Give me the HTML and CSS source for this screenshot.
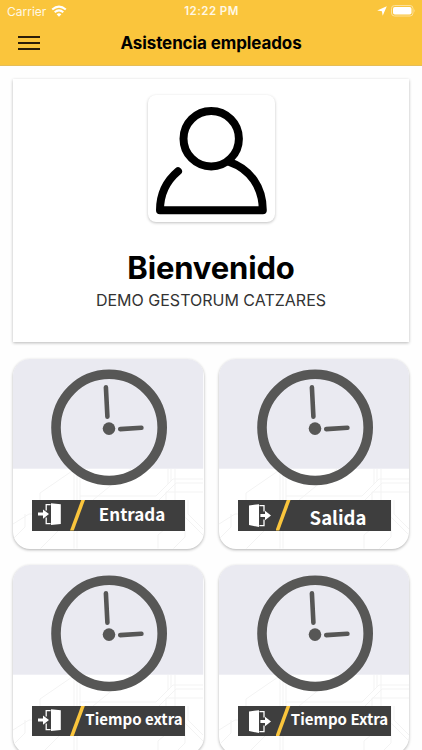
FILE: index.html
```html
<!DOCTYPE html>
<html lang="es">
<head>
    <meta charset="UTF-8">
    <meta name="viewport" content="width=device-width, initial-scale=1.0">
    <title>Asistencia empleados</title>
    <link rel="stylesheet" href="styles.css">
</head>
<body>

    <!-- simbolos compartidos por las tarjetas -->
    <svg class="simbolos" aria-hidden="true">
        <symbol id="reloj" viewBox="0 0 190.5 189.5">
            <rect class="fondo" width="190.5" height="109.7"/>
            <g class="lineas">
                <path d="M27 148V134L62 110M61 110V190M64 110V190M67 110V141M27 190L76 141M0 165L16 155H40M80 141L118 110"/>
                <path d="M190 120H160L143 137H67M190 124H163L146 141M155 110V125M158 110V122M162 110V160M190 133H153V145M172 141V178L160 190M190 170L175 155V141M190 176L172 158M0 180L12 168V155M145 190V176L152 170"/>
            </g>
            <circle class="aro" cx="96.1" cy="68.4" r="53.1"/>
            <circle class="eje" cx="96" cy="69.6" r="6.3"/>
            <path class="aguja" d="M92.9 28.4L94.4 57.6M107.2 70.1L128.4 68.8"/>
        </symbol>
        <symbol id="entrar" viewBox="0 0 24 24">
            <path d="M13 1.2L22.8 2.2V22L13 23z"/>
            <path class="marco" d="M12.6 2.6H8.2V8.6M8.2 15.6V21.6H12.6"/>
            <path d="M0 10.6H5V7.4L11 12.1L5 16.8V13.6H0z"/>
        </symbol>
        <symbol id="salir" viewBox="0 0 24 24">
            <path d="M1 2.4L11 1.2V24L1 22z"/>
            <path class="marco" d="M11.4 2.6H16V8.6M16 16.6V22.6H11.4"/>
            <path d="M12.4 11H17V7.8L23 12.5L17 17.2V14H12.4z"/>
        </symbol>
    </svg>

    <header class="cabecera">
        <div class="estado">
            <div class="operador">
                <span>Carrier</span>
                <svg class="wifi" viewBox="0 0 16 12">
                    <path d="M1.2 4.6Q8-1.4 14.8 4.6M3.7 7.3Q8 3.4 12.3 7.3"/>
                    <path class="punto" d="M5.6 9.2Q8 7.2 10.4 9.2L8 11.7z"/>
                </svg>
            </div>
            <span class="hora">12:22 PM</span>
            <div class="bateria">
                <svg class="flecha" viewBox="0 0 10 10"><path d="M9.8 .2L5.7 9.8L4.9 5.3L.2 4.5z"/></svg>
                <svg class="pila" viewBox="0 0 25 12">
                    <rect class="caja" x=".5" y=".5" width="21.5" height="10.5" rx="3"/>
                    <rect x="2" y="2" width="18.5" height="7.5" rx="1.8"/>
                    <path class="polo" d="M23.2 4Q24.6 5.8 23.2 7.6z"/>
                </svg>
            </div>
        </div>
        <nav class="barra">
            <div class="menu"><i></i><i></i><i></i></div>
            <h1 class="titulo">Asistencia empleados</h1>
        </nav>
    </header>

    <main class="contenido">
        <section class="bienvenida">
            <div class="avatar">
                <svg viewBox="0 0 127 127">
                    <circle cx="63.2" cy="43.7" r="27.7"/>
                    <path d="M30 76.3C18.5 86 12 98 12 115.2H114.8C114.8 92 102 74 81.5 67"/>
                </svg>
            </div>
            <h2 class="saludo">Bienvenido</h2>
            <p class="nombre">DEMO GESTORUM CATZARES</p>
        </section>

        <section class="opciones">
            <article class="tarjeta">
                <svg class="dibujo"><use href="#reloj"/></svg>
                <div class="etiqueta">
                    <svg class="puerta"><use href="#entrar"/></svg>
                    <span class="texto">Entrada</span>
                </div>
            </article>
            <article class="tarjeta">
                <svg class="dibujo"><use href="#reloj"/></svg>
                <div class="etiqueta">
                    <svg class="puerta salida"><use href="#salir"/></svg>
                    <span class="texto bajo">Salida</span>
                </div>
            </article>
            <article class="tarjeta">
                <svg class="dibujo"><use href="#reloj"/></svg>
                <div class="etiqueta">
                    <svg class="puerta"><use href="#entrar"/></svg>
                    <span class="texto extra">Tiempo extra</span>
                </div>
            </article>
            <article class="tarjeta">
                <svg class="dibujo"><use href="#reloj"/></svg>
                <div class="etiqueta">
                    <svg class="puerta salida"><use href="#salir"/></svg>
                    <span class="texto extra">Tiempo Extra</span>
                </div>
            </article>
        </section>
    </main>

</body>
</html>
```

FILE: styles.css
```css
* {
    margin: 0;
    padding: 0;
    box-sizing: border-box;
}
body {
    font-family: Inter, "Liberation Sans", sans-serif;
    background-color: #fefefe;
    height: 750px;
    overflow: hidden;
}

.simbolos {
    display: none;
}

/* cabecera */
.cabecera {
    height: 66px;
    background-color: #fac53c;
    border-bottom: 1px solid #e5bd58;
}

.estado {
    display: grid;
    grid-template-columns: 1fr auto 1fr;
    align-items: center;
    height: 22px;
    padding: 0 6px 0 7px;
    color: #fff8e4;
    font-size: 12px;
}

.operador,
.bateria {
    display: flex;
    align-items: center;
}

.operador {
    gap: 5px;
}

.hora {
    font-size: 11.5px;
    font-weight: 600;
    letter-spacing: .45px;
}

.bateria {
    justify-content: flex-end;
    gap: 4px;
}

.wifi {
    width: 16px;
    height: 12px;
    fill: none;
    stroke: white;
    stroke-width: 2;
}

.wifi .punto {
    fill: white;
    stroke: none;
}

.flecha {
    width: 10px;
    height: 10px;
    fill: white;
}

.pila {
    width: 25px;
    height: 12px;
    fill: white;
}

.pila .caja {
    fill: none;
    stroke: #fde19a;
}

.pila .polo {
    fill: #fde19a;
}

.barra {
    display: grid;
    grid-template-columns: 22px 1fr 22px;
    align-items: center;
    height: 42px;
    padding: 0 18px;
}

.menu {
    display: flex;
    flex-direction: column;
    gap: 4px;
}

.menu i {
    height: 2px;
    background-color: #2b1d08;
}

.titulo {
    font-size: 17px;
    font-weight: 700;
    letter-spacing: -.1px;
    text-align: center;
    white-space: nowrap;
}

/* bienvenida */
.contenido {
    padding: 13px 13px 0;
}

.bienvenida {
    display: flex;
    flex-direction: column;
    align-items: center;
    height: 263px;
    padding-top: 16px;
    background-color: white;
    box-shadow: 0 1px 3px rgba(0, 0, 0, .28);
}

.avatar {
    width: 127px;
    height: 127px;
    border-radius: 8px;
    box-shadow: 0 1px 3px rgba(0, 0, 0, .25);
}

.avatar svg {
    display: block;
    fill: none;
    stroke: black;
    stroke-width: 8;
    stroke-linecap: round;
    stroke-linejoin: round;
}

.saludo {
    margin-top: 26px;
    font-size: 31px;
    font-weight: 700;
    line-height: 40px;
    letter-spacing: -.15px;
}

.nombre {
    margin-top: 1px;
    font-size: 16px;
    line-height: 22px;
    color: #333;
}

/* tarjetas */
.opciones {
    display: grid;
    grid-template-columns: 1fr 1fr;
    gap: 16px 15px;
    margin-top: 17px;
}

.tarjeta {
    display: grid;
    height: 189.5px;
    border-radius: 17px;
    overflow: hidden;
    background-color: white;
    box-shadow: 0 1px 3px rgba(0, 0, 0, .3);
}

.dibujo,
.etiqueta {
    grid-area: 1 / 1;
}

.dibujo {
    width: 100%;
    height: 189.5px;
}

.fondo {
    fill: #eaeaf1;
}

.lineas {
    fill: none;
    stroke: #f3f3f3;
    stroke-width: 1;
}

.aro {
    fill: none;
    stroke: #575756;
    stroke-width: 9.6;
}

.eje {
    fill: #575756;
}

.aguja {
    stroke: #575756;
    stroke-width: 4.6;
    stroke-linecap: round;
}

.etiqueta {
    display: grid;
    grid-template-columns: 50px 1fr;
    grid-template-rows: 30.5px;
    align-items: center;
    width: 153px;
    height: 30.5px;
    margin: 141px 0 0 19px;
    color: white;
    background-color: #3e3e3e;
}

.etiqueta::before {
    content: "";
    grid-area: 1 / 1 / 2 / 3;
    justify-self: start;
    width: 15px;
    height: 30.5px;
    margin-left: 38px;
    background-color: #fac53c;
    clip-path: polygon(75% 0, 100% 0, 25% 100%, 0 100%);
}

.puerta {
    grid-area: 1 / 1;
    width: 24px;
    height: 24px;
    margin-left: 6px;
    margin-top: -2px;
    fill: white;
}

.salida {
    margin-left: 10px;
    margin-top: 0;
}

.marco {
    fill: none;
    stroke: white;
    stroke-width: 1.3;
}

.texto {
    grid-area: 1 / 2;
    padding: 0 3px 3px 0;
    font-family: "Noto Sans CJK SC", sans-serif;
    font-size: 17px;
    font-weight: 700;
    line-height: 24px;
    text-align: center;
    white-space: nowrap;
}

.bajo {
    padding: 4px 2px 0 0;
    font-size: 18.5px;
}

.extra {
    padding: 0 0 3px 1px;
    font-size: 15px;
}
```
